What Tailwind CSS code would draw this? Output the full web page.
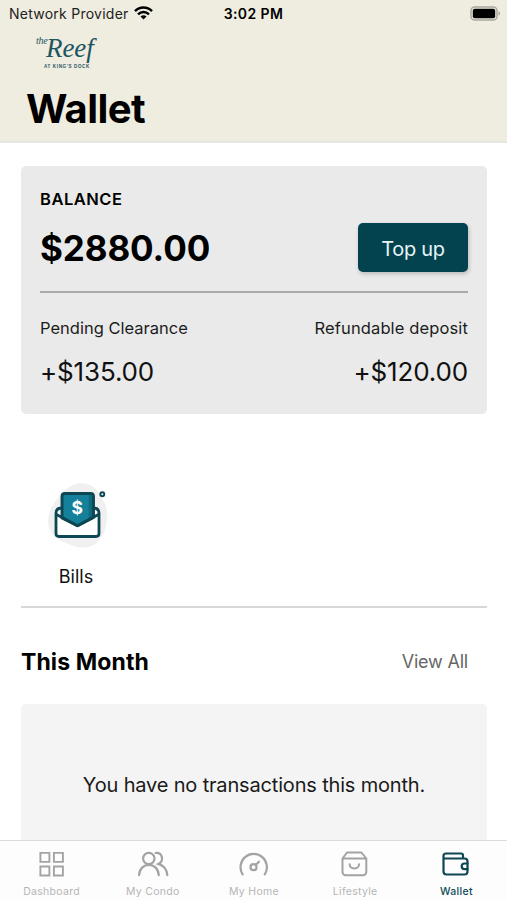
<!DOCTYPE html>
<html lang="en">
<head>
<meta charset="utf-8">
<meta name="viewport" content="width=device-width, initial-scale=1">
<title>Wallet</title>
<script src="https://cdn.jsdelivr.net/npm/@tailwindcss/browser@4"></script>
</head>
<body class="bg-white font-['Inter','Liberation_Sans',sans-serif] text-black">
<div class="flex h-[900px] w-[507px] flex-col overflow-hidden whitespace-nowrap">

  <header class="h-[143px] shrink-0 border-b-2 border-[#e6e6e3] bg-[#efece0]">
    <div class="grid h-[26px] grid-cols-[1fr_auto_1fr] items-center pl-[9px] pr-[6px]">
      <div class="flex items-center gap-[5px]">
        <span class="text-[14px] tracking-[0.25px] text-[#222]">Network Provider</span>
        <svg class="h-[14px] w-[19px]" viewBox="0 0 19 14" fill="none" stroke="#000" stroke-width="2.5">
          <path d="M1 5.200C5.800.4 13.200.4 18 5.200"/>
          <path d="M4 8.300c3.200-3.100 7.800-3.100 11 0"/>
          <path d="M9.500 13.600 6.500 10.600c1.700-1.700 4.300-1.700 6 0z" fill="#000" stroke="none"/>
        </svg>
      </div>
      <span class="mr-[3px] text-[14px] font-semibold tracking-[0.4px]">3:02 PM</span>
      <svg class="h-[15px] w-[31px] justify-self-end" viewBox="0 0 31 15">
        <rect x="1" y="1" width="26" height="13" rx="3.800" fill="#efece0" stroke="#aaa89f" stroke-width="1.500"/>
        <rect x="2.800" y="2.800" width="22.400" height="9.400" rx="2" fill="#000"/>
        <path d="M28.500 5.500c2.200.8 2.200 3.200 0 4z" fill="#aaa89f"/>
      </svg>
    </div>
    <div class="ml-[36px] flex h-[48px] w-[66px] flex-col pt-[7px] font-['Liberation_Serif',serif] text-[#1d5560]">
      <div class="flex h-[31px] items-start">
        <span class="mt-[1px] w-[11px] text-[10px] italic leading-[14px] tracking-[-0.3px]">the</span>
        <span class="-ml-px text-[27px] italic leading-[30px] tracking-[-0.1px]">Reef</span>
      </div>
      <span class="ml-[8px] font-['Liberation_Sans',sans-serif] text-[4.500px] font-bold leading-[6px] tracking-[0.650px]">AT KING'S DOCK</span>
    </div>
    <h1 class="pl-[26px] pt-[10px] text-[40px] font-bold leading-[50px] tracking-[-0.600px]">Wallet</h1>
  </header>

  <main class="flex min-h-0 flex-1 flex-col overflow-hidden pl-[21px] pr-5 pt-[23px]">
    <section class="h-[248px] shrink-0 rounded-[5px] bg-[#eaeaea] px-[19px] pt-[23px]">
      <h2 class="text-[16.500px] font-semibold leading-5 tracking-[0.500px]">BALANCE</h2>
      <div class="mt-[14px] flex items-center justify-between">
        <span class="pt-px text-[35px] font-bold leading-[48px] tracking-[-0.100px]">$2880.00</span>
        <button class="h-[49px] w-[110px] rounded-[5px] bg-[#02434f] pt-[2px] text-[20px] tracking-[-0.300px] text-[#e9f4f6] shadow-[1px_2px_4px_rgba(0,0,0,0.2)]">Top up</button>
      </div>
      <div class="mt-[19px] h-[2px] bg-[#a8adac]"></div>
      <div class="mt-[25px] flex justify-between text-[16.500px] leading-5 text-[#1c1c1c]">
        <span>Pending Clearance</span><span class="tracking-[0.130px]">Refundable deposit</span>
      </div>
      <div class="mt-[18px] flex justify-between text-[26px] leading-8 tracking-[-0.150px] text-[#111]">
        <span>+$135.00</span><span>+$120.00</span>
      </div>
    </section>

    <section class="mt-[66px] flex h-[128px] shrink-0 flex-col border-b-2 border-[#d8d8d8]">
      <div class="flex w-[110px] flex-col items-center">
        <svg class="h-[72px] w-[64px]" viewBox="0 0 64 72" fill="none" stroke-linejoin="round">
          <path d="M29 5c9-4 21-1 26 8 3 6 8 11 8 21s-1 18-8 26c-6 8-16 9-25 6C18 62 7 57 4.500 46 3 34 7 27 14 18c4-6 8-10 15-13z" fill="#f0f0f0"/>
          <path d="M18 26c-4 0-6 2.500-6 6v21.500c0 2 1 3 3 3h37c2 0 3-1 3-3V32c0-3.500-2-6-6-6z" fill="#fff"/>
          <path d="M18 28c-4 0-6 2-6 5v20.500c0 2 1 3 3 3h37c2 0 3-1 3-3V33c0-3-2-5-6-5" stroke="#0d4753" stroke-width="2.800"/>
          <path d="M18 16.500c0-2 1-3 3-3h25.500c2 0 3 1 3 3V37.500L33.500 45.700 18 38z" fill="#14809a" stroke="#0d4753" stroke-width="2.900"/>
          <path d="M44.800 15h3.200v22l-3.200 1.800z" fill="#0e6a80"/>
          <path d="M12.500 34.500 33.500 45.700 54.500 34.500" stroke="#0d4753" stroke-width="2.800"/>
          <text x="33.300" y="34" text-anchor="middle" font-family="Inter" font-size="17.500" font-weight="700" fill="#fff">$</text>
          <circle cx="58.300" cy="14.300" r="2" fill="#d9f0f4" stroke="#0d4753" stroke-width="1.900"/>
        </svg>
        <span class="mt-[13px] text-[18px] leading-6 text-[#111]">Bills</span>
      </div>
    </section>

    <div class="mt-[39px] flex h-7 shrink-0 items-center justify-between pr-[19px]">
      <h2 class="pt-[3px] text-[23px] font-bold tracking-[0.100px]">This Month</h2>
      <a class="text-[18px] tracking-[-0.200px] text-[#666]">View All</a>
    </div>
    <section class="mt-[29px] flex h-[180px] shrink-0 justify-center rounded-[5px] bg-[#f4f4f4] pt-[67px] text-[20px] leading-7 tracking-[-0.170px] text-[#1a1a1a]">
      <p>You have no transactions this month.</p>
    </section>
  </main>

  <nav class="grid h-[60px] shrink-0 grid-cols-5 border-t border-[#dcdcdc] bg-[#fdfdfd] pl-px pt-[9px] text-[10.500px] leading-[14px] tracking-[0.300px] text-[#b5b5b5]">
    <div class="flex flex-col items-center gap-[7px]">
      <svg class="h-7 w-8" viewBox="0 0 32 28" fill="none" stroke="#a3a3a3" stroke-width="1.900">
        <path d="M4.400 2.900h9v9h-9zM17.900 2.900h9v9h-9zM4.400 16.500h9v9h-9zM17.900 16.500h9v9h-9z"/>
      </svg>
      <span>Dashboard</span>
    </div>
    <div class="flex flex-col items-center gap-[7px]">
      <svg class="h-7 w-8" viewBox="0 0 32 28" fill="none" stroke="#a3a3a3" stroke-width="2.200" stroke-linecap="round">
        <circle cx="11.800" cy="8.500" r="5.700"/>
        <path d="M2 25.200C3 11.300 20.800 11.300 21.800 25.200M18.800 2.900c7-.3 8.500 8 2.500 11 5 1.500 8.500 6 9 11.300"/>
      </svg>
      <span>My Condo</span>
    </div>
    <div class="flex flex-col items-center gap-[7px]">
      <svg class="h-7 w-8" viewBox="0 0 32 28" fill="none" stroke="#a3a3a3" stroke-width="2.200" stroke-linecap="round">
        <path d="M4.600 24.300A13.200 13.200 0 1 1 26.800 24.300"/>
        <circle cx="15.500" cy="17.200" r="3"/>
        <path d="M17.900 14.700l3-3"/>
      </svg>
      <span>My Home</span>
    </div>
    <div class="flex flex-col items-center gap-[7px]">
      <svg class="h-7 w-8" viewBox="0 0 32 28" fill="none" stroke="#a3a3a3" stroke-width="2" stroke-linecap="round" stroke-linejoin="round">
        <path d="M3.500 8.500 8 2.500H22.500L27.300 8.500V22a3.200 3.200 0 0 1-3.200 3.200H6.700A3.200 3.200 0 0 1 3.500 22zM3.500 8.500H27.300M10.700 14.300c.3 5.600 9 5.600 9.400 0"/>
      </svg>
      <span>Lifestyle</span>
    </div>
    <div class="flex flex-col items-center gap-[7px] text-[#0f4c57]">
      <svg class="h-7 w-8" viewBox="0 0 32 28" fill="none" stroke="#0d4753" stroke-width="2.200" stroke-linecap="round" stroke-linejoin="round">
        <path d="M23 8.500V5.500a2 2 0 0 0-2-2H6a2.500 2.500 0 0 0-2.500 2.500V21.500a3 3 0 0 0 3 3H24.500a3 3 0 0 0 3-3V11.500a3 3 0 0 0-3-3H4"/>
        <path d="M27.500 13.500h-3a2.800 2.800 0 0 0 0 5.600h3"/>
      </svg>
      <span class="font-medium">Wallet</span>
    </div>
  </nav>
</div>
</body>
</html>
